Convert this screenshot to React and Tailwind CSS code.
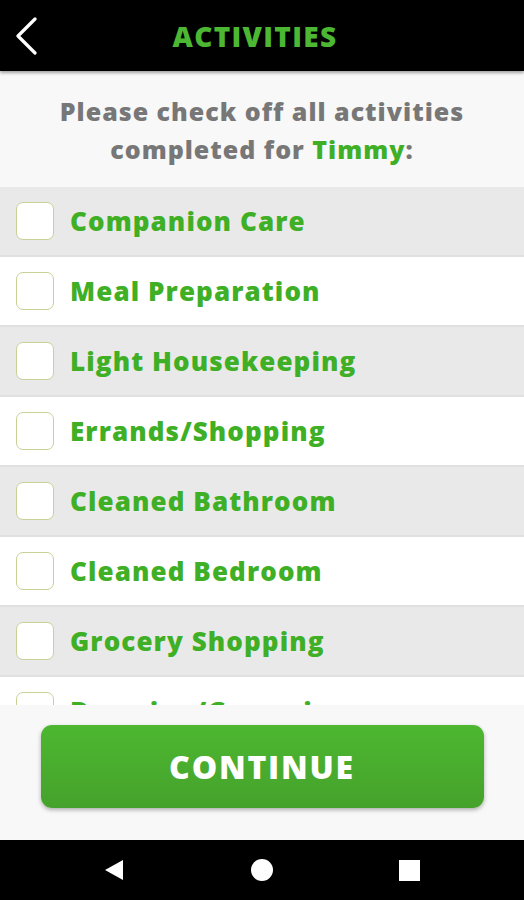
import React from "react";

const items = [
  "Companion Care",
  "Meal Preparation",
  "Light Housekeeping",
  "Errands/Shopping",
  "Cleaned Bathroom",
  "Cleaned Bedroom",
  "Grocery Shopping",
  "Dressing/Grooming",
];

export default function App() {
  return (
    <div
      className="w-[524px] h-[900px] flex flex-col bg-[#f8f8f8] overflow-hidden"
      style={{ fontFamily: "'Open Sans', 'Noto Sans', sans-serif" }}
    >
      <div className="h-[71px] bg-black flex items-center relative shrink-0 shadow-[0_2px_3px_rgba(0,0,0,0.35)] z-10">
        <svg className="absolute left-[14px] top-[17px]" width="26" height="38" viewBox="0 0 26 38">
          <polyline points="21,2 4,19 21,36" fill="none" stroke="white" strokeWidth="3.2" strokeLinecap="round" strokeLinejoin="round" />
        </svg>
        <div className="w-full text-center text-[28px] font-extrabold tracking-[1.3px] text-[#4cb733] pr-[14px]">ACTIVITIES</div>
      </div>
      <div className="h-[116px] shrink-0 flex flex-col items-center justify-center text-[25px] font-extrabold leading-[38px] text-[#777777] pt-[1px] tracking-[1px]">
        <div>Please check off all activities</div>
        <div>
          completed for <span className="text-[#3faf25]">Timmy</span>:
        </div>
      </div>
      <div className="flex-1 overflow-hidden">
        {items.map((t, i) => (
          <div
            key={t}
            className={`h-[70px] flex items-center border-b-2 border-[#e0e0e0] ${i % 2 === 0 ? "bg-[#e9e9e9]" : "bg-white"}`}
          >
            <div className="ml-[16px] w-[38px] h-[38px] rounded-[7px] border border-[#c8d296] bg-white shrink-0" />
            <div className="ml-[16px] text-[26px] font-extrabold tracking-[1.1px] text-[#3faf25]">{t}</div>
          </div>
        ))}
      </div>
      <div className="h-[135px] shrink-0 bg-[#f8f8f8] flex items-start justify-center pt-[20px] z-10">
        <div className="w-[443px] h-[83px] rounded-[11px] bg-gradient-to-b from-[#4db730] to-[#45a22c] shadow-[0_2px_4px_rgba(0,0,0,0.3)] flex items-center justify-center">
          <span className="text-white text-[32px] font-extrabold tracking-[1.8px]">CONTINUE</span>
        </div>
      </div>
      <div className="h-[60px] shrink-0 bg-black flex items-center justify-center relative">
        <svg className="absolute left-[104px] top-[19px]" width="20" height="22" viewBox="0 0 20 22">
          <polygon points="19,1 19,21 1,11" fill="white" />
        </svg>
        <div className="absolute left-[251px] top-[19px] w-[22px] h-[22px] rounded-full bg-white" />
        <div className="absolute left-[399px] top-[20px] w-[21px] h-[21px] bg-white" />
      </div>
    </div>
  );
}
